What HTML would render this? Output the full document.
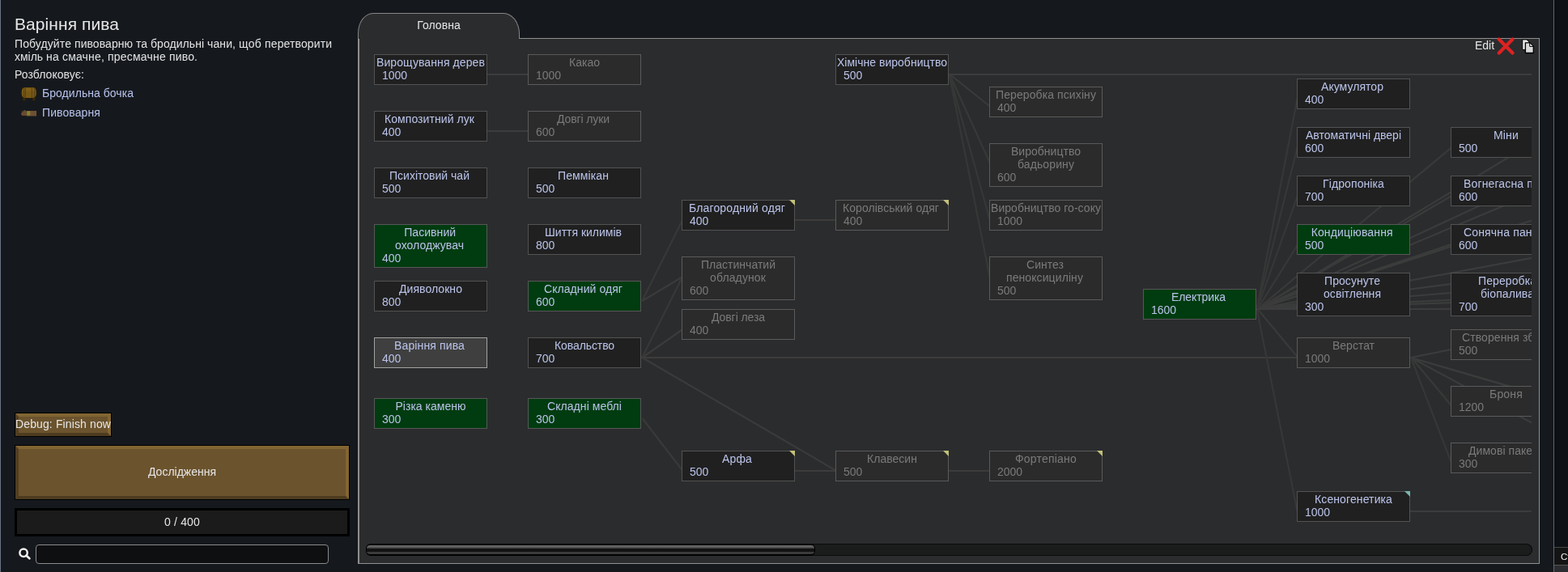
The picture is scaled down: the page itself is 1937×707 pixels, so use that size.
<!DOCTYPE html>
<html lang="uk">
<head>
<meta charset="utf-8">
<title>Дослідження</title>
<style>
*{box-sizing:border-box;margin:0;padding:0}
html,body{width:1937px;height:707px;overflow:hidden;background:#15191e}
body{position:relative;will-change:transform;font-family:"Liberation Sans",sans-serif;font-size:14px;line-height:16px;color:#e4e4e4}
.edgeL{position:absolute;left:0;top:0;width:1px;height:707px;background:#6a7582}
.title{position:absolute;left:18px;top:18px;font-size:21px;line-height:24px;color:#e6e6e6;white-space:nowrap}
.desc{position:absolute;left:18px;top:46px;white-space:nowrap;color:#e2e2e2}
.unl{position:absolute;left:18px;top:84px;color:#e2e2e2}
.item{position:absolute;left:52px;color:#b8c2ec;white-space:nowrap}
.ico{position:absolute;left:26px}
.btn{position:absolute;background:#6b532d;border:1px solid #000;color:#e6e6e6;text-align:center;white-space:nowrap;overflow:hidden}
.btn:before{content:"";position:absolute;left:0;top:0;right:0;bottom:0;border-style:solid;border-width:4px;border-color:#816532 #816532 #4e3c20 #513f22}
.btn span{position:relative}
.prog{position:absolute;left:18px;top:628px;width:414px;height:35px;background:#1b1b1b;border:3px solid #000;text-align:center;line-height:29px;color:#e6e6e6}
.search{position:absolute;left:44px;top:673px;width:362px;height:24px;border:1px solid #8a8a8a;border-radius:4px;background:#0e0f11}
.mag{position:absolute;left:21px;top:675px}
.tab{position:absolute;left:442px;top:16px;width:200px;height:32px;border:1px solid #868686;border-bottom:none;border-radius:19px 20px 0 0/25px 26px 0 0;background:#2b2c2e;text-align:center;line-height:29px;color:#e6e6e6;z-index:2}
.panel{position:absolute;left:442px;top:47px;width:1460px;height:650px;border:1px solid #8e8e8e;border-left-width:2px;background:#2b2c2e}
.view{position:absolute;left:8px;top:9px;width:1440px;height:611px;overflow:hidden}
.lines{position:absolute;left:0;top:0}
.lines line{stroke:#3c3c3c;stroke-width:2.2}
.n{position:absolute;width:140px;border:1px solid #525252;background:#202020;color:#bbc4ea;white-space:nowrap}
.n b{display:block;font-weight:normal;line-height:16px}
.n b:first-of-type{margin-top:1px}
.n u{display:block;text-decoration:none;padding-left:9px;line-height:16px}
.n.d{background:#2b2b2b;border-color:#5a5a5a;color:#7a7a7a}
.n.g{background:#003c10;border-color:#585658}
.n.s{background:#3f3f3f;border-color:#a2a2a2}
.k{position:absolute;right:-1px;top:-1px;width:0;height:0;border-style:solid;border-width:0 7px 7px 0;border-color:transparent #c1c07c transparent transparent}
.k.c{border-color:transparent #78b6ae transparent transparent}
.sb{position:absolute;left:8px;top:624px;width:1441px;height:15px;border-radius:7.5px;background:#1b1c1c;box-shadow:inset 0 0 0 1px #0b0b0b}
.th{position:absolute;left:8px;top:624px;width:555px;height:15px;border-radius:6px;background:#000}
.th:before{content:"";position:absolute;left:1px;right:1px;top:2px;bottom:2px;border-radius:4px;background:linear-gradient(#707070 0,#5c5c5c 18%,#484848 30%,#151515 40%,#111 45%,#111 70%,#3a3a3a 76%,#3c3c3c 100%)}
.edit{position:absolute;left:1378px;top:-1px;color:#e6e6e6;line-height:18px}
.edgeR{position:absolute;left:1919px;top:0;width:1px;height:707px;background:#5b6878}
.right{position:absolute;left:1920px;top:0;width:17px;height:707px;background:#0d1014}
.rbox{position:absolute;left:1920px;top:676px;width:17px;height:23px;background:#141414;border-top:1px solid #474747;border-bottom:1px solid #565656;color:#f0f0f0;font-size:11.5px;line-height:22px;padding-left:8px;white-space:nowrap;overflow:hidden}
.rbot{position:absolute;left:1920px;top:699px;width:17px;height:8px;background:#2c2d30}
</style>
</head>
<body>
<div class="edgeL"></div>
<div class="title" style="letter-spacing:0.074px">Варіння пива</div>
<div class="desc"><span><span style="letter-spacing:0.1px">Побудуйте </span><span style="letter-spacing:0.056px">пивоварню </span><span style="letter-spacing:0.026px">та </span><span style="letter-spacing:0.053px">бродильні </span><span style="letter-spacing:0.096px">чани, </span><span style="letter-spacing:0.238px">щоб </span><span style="letter-spacing:0.112px">перетворити</span></span><br><span><span style="letter-spacing:-0.016px">хміль </span><span style="letter-spacing:0.198px">на </span><span style="letter-spacing:0.164px">смачне, </span><span style="letter-spacing:0.206px">пресмачне </span><span style="letter-spacing:0.128px">пиво.</span></span></div>
<div class="unl" style="letter-spacing:0.055px">Розблоковує:</div>
<svg class="ico" style="top:107px" width="20" height="18" viewBox="26 107 20 18"><rect x="28.3" y="120.5" width="3.2" height="3.8" fill="#3a2808"/><rect x="40.3" y="120.5" width="3.2" height="3.8" fill="#3a2808"/><rect x="26.2" y="107.7" width="19.1" height="13.8" rx="4.2" ry="5" fill="#2a1d06"/><rect x="26.8" y="108.3" width="17.9" height="12.6" rx="3.8" ry="4.6" fill="#775816"/><rect x="27.6" y="108.6" width="16.3" height="4" rx="3" fill="#85631b" opacity=".7"/><path d="M29.6 108.6v12M31.4 108.4v12.4M39.4 108.4v12.4M42.6 108.8v11.6" stroke="#4a360d" stroke-width=".7" fill="none"/></svg>
<div class="item" style="top:107px;letter-spacing:0.046px">Бродильна бочка</div>
<svg class="ico" style="top:134px" width="20" height="12" viewBox="26 134 20 12"><path d="M26.2 139.5l2-1.4 1-1.6 1.6-.6 1.2 1 .8 1.6v4.6h-5.4l-1.2-1.4z" fill="#6a4a30"/><rect x="32.6" y="137" width="12.4" height="6.4" fill="#7a5a38"/><rect x="33.4" y="137.4" width="3.6" height="5" fill="#7f8232"/><path d="M38 138h6.4M38.4 140h6M38 142h6.6" stroke="#5e4228" stroke-width=".8"/><path d="M26.6 137.6l1.2.6" stroke="#3f7a22" stroke-width=".8"/></svg>
<div class="item" style="top:131px;letter-spacing:0.099px">Пивоварня</div>
<div class="btn" style="left:18px;top:510px;width:120px;height:30px;line-height:27px"><span style="letter-spacing:0.123px">Debug: Finish now</span></div>
<div class="btn" style="left:18px;top:550px;width:414px;height:68px;line-height:64px"><span style="letter-spacing:-0.006px">Дослідження</span></div>
<div class="prog"><span style="letter-spacing:0.172px">0 / 400</span></div>
<svg class="mag" width="18" height="19" viewBox="0 0 18 19"><g stroke="#0a0a0a" stroke-opacity="0.55" fill="none" stroke-linecap="round"><circle cx="8.1" cy="8.2" r="4.7" stroke-width="4"/><line x1="11.6" y1="11.7" x2="15.4" y2="15.2" stroke-width="4.4"/></g><circle cx="8.1" cy="8.2" r="4.7" fill="none" stroke="#f2f2f2" stroke-width="2.5"/><line x1="11.6" y1="11.7" x2="15.4" y2="15.2" stroke="#f2f2f2" stroke-width="2.8" stroke-linecap="round"/></svg>
<div class="search"></div>
<div class="tab"><span style="letter-spacing:0.061px">Головна</span></div>
<div class="panel">
<div class="view">
<svg class="lines" width="1440" height="611" viewBox="452 57 1440 611">
<line x1="602" y1="92" x2="652" y2="92"/>
<line x1="602" y1="162" x2="652" y2="162"/>
<line x1="793.2" y1="372" x2="843.2" y2="272" style="stroke:#373837"/>
<line x1="793.32" y1="372" x2="843.32" y2="342" style="stroke:#3a3b3a"/>
<line x1="793.2" y1="442" x2="843.2" y2="342" style="stroke:#373837"/>
<line x1="793.41" y1="442" x2="843.41" y2="407" style="stroke:#3a3b3a"/>
<line x1="792" y1="442" x2="1602" y2="442"/>
<line x1="793.31" y1="442" x2="1033.31" y2="582" style="stroke:#3a3b3a"/>
<line x1="793.45" y1="517" x2="843.45" y2="582" style="stroke:#383938"/>
<line x1="982" y1="582" x2="1032" y2="582"/>
<line x1="1172" y1="582" x2="1222" y2="582"/>
<line x1="982" y1="272" x2="1032" y2="272"/>
<line x1="1173.46" y1="92" x2="1223.46" y2="132" style="stroke:#393a3a"/>
<line x1="1173.13" y1="92" x2="1223.13" y2="202" style="stroke:#373837"/>
<line x1="1172.77" y1="92" x2="1222.77" y2="272" style="stroke:#363736"/>
<line x1="1172.58" y1="92" x2="1222.58" y2="342" style="stroke:#363736"/>
<line x1="1172" y1="92" x2="1982" y2="92"/>
<line x1="1552.56" y1="382" x2="1602.56" y2="122" style="stroke:#363736"/>
<line x1="1552.71" y1="382" x2="1602.71" y2="182" style="stroke:#363736"/>
<line x1="1552.95" y1="382" x2="1602.95" y2="242" style="stroke:#363737"/>
<line x1="1553.35" y1="382" x2="1603.35" y2="302" style="stroke:#373838"/>
<line x1="1553.03" y1="382" x2="1603.03" y2="362" style="stroke:#3b3c3b"/>
<line x1="1553.48" y1="382" x2="1603.48" y2="442" style="stroke:#383938"/>
<line x1="1552.58" y1="382" x2="1602.58" y2="632" style="stroke:#363736"/>
<line x1="1552.9" y1="382" x2="1792.9" y2="302" style="stroke:#3b3c3b"/>
<line x1="1552.25" y1="382" x2="1792.25" y2="362" style="stroke:#3b3c3c"/>
<line x1="1742.58" y1="442" x2="1792.58" y2="432" style="stroke:#3b3c3c"/>
<line x1="1743.48" y1="442" x2="1793.48" y2="502" style="stroke:#383938"/>
<line x1="1743.01" y1="442" x2="1793.01" y2="572" style="stroke:#363737"/>
<line x1="1742" y1="632" x2="1982" y2="632"/>
<line x1="1553.48" y1="382" x2="1793.48" y2="182" style="stroke:#393a39"/>
<line x1="1553.31" y1="382" x2="1793.31" y2="242" style="stroke:#3a3b3a"/>
<line x1="1553.33" y1="382" x2="1983.33" y2="122" style="stroke:#3a3b3a"/>
<line x1="1553.15" y1="382" x2="1983.15" y2="182" style="stroke:#3a3b3b"/>
<line x1="1553.07" y1="382" x2="2173.07" y2="122" style="stroke:#3b3c3b"/>
<line x1="1552.88" y1="382" x2="2172.88" y2="182" style="stroke:#3b3c3b"/>
<line x1="1552.54" y1="382" x2="1982.54" y2="302" style="stroke:#3b3c3c"/>
<line x1="1552.38" y1="382" x2="2172.38" y2="302" style="stroke:#3b3c3c"/>
<line x1="1552.14" y1="382" x2="1982.14" y2="362" style="stroke:#3b3c3c"/>
<line x1="1552.1" y1="382" x2="2172.1" y2="362" style="stroke:#3b3c3c"/>
<line x1="1552" y1="382" x2="1982" y2="382"/>
<line x1="1742.81" y1="442" x2="1982.81" y2="512" style="stroke:#3b3c3b"/>
<line x1="1743.26" y1="442" x2="1983.26" y2="572" style="stroke:#3a3b3b"/>
</svg>
<div class="n" style="left:10px;top:10px;height:38px"><b style="margin-left:2px;letter-spacing:0.097px">Вирощування дерев</b><u>1000</u></div>
<div class="n" style="left:10px;top:80px;height:38px"><b style="margin-left:12px;letter-spacing:0.067px">Композитний лук</b><u>400</u></div>
<div class="n" style="left:10px;top:150px;height:38px"><b style="margin-left:18px;letter-spacing:0.006px">Психітовий чай</b><u>500</u></div>
<div class="n g" style="left:10px;top:220px;height:54px"><b style="margin-left:36.2px;letter-spacing:0.062px">Пасивний</b><b style="margin-left:25px;letter-spacing:0.048px">охолоджувач</b><u>400</u></div>
<div class="n" style="left:10px;top:290px;height:38px"><b style="margin-left:30px;letter-spacing:0.061px">Дияволокно</b><u>800</u></div>
<div class="n s" style="left:10px;top:360px;height:38px"><b style="margin-left:24px;letter-spacing:0.132px">Варіння пива</b><u>400</u></div>
<div class="n g" style="left:10px;top:435px;height:38px"><b style="margin-left:25.5px;letter-spacing:0.013px">Різка каменю</b><u>300</u></div>
<div class="n d" style="left:200px;top:10px;height:38px"><b style="margin-left:50px;letter-spacing:0.013px">Какао</b><u>1000</u></div>
<div class="n d" style="left:200px;top:80px;height:38px"><b style="margin-left:35px;letter-spacing:-0.109px">Довгі луки</b><u>600</u></div>
<div class="n" style="left:200px;top:150px;height:38px"><b style="margin-left:36px;letter-spacing:0.105px">Пеммікан</b><u>500</u></div>
<div class="n" style="left:200px;top:220px;height:38px"><b style="margin-left:20px;letter-spacing:-0.005px">Шиття килимів</b><u>800</u></div>
<div class="n g" style="left:200px;top:290px;height:38px"><b style="margin-left:19px;letter-spacing:0.067px">Складний одяг</b><u>600</u></div>
<div class="n" style="left:200px;top:360px;height:38px"><b style="margin-left:32px;letter-spacing:-0.094px">Ковальство</b><u>700</u></div>
<div class="n g" style="left:200px;top:435px;height:38px"><b style="margin-left:23px;letter-spacing:0.064px">Складні меблі</b><u>300</u></div>
<div class="n" style="left:390px;top:190px;height:38px"><i class="k y"></i><b style="margin-left:8px;letter-spacing:0.15px">Благородний одяг</b><u>400</u></div>
<div class="n d" style="left:390px;top:260px;height:54px"><b style="margin-left:23px;letter-spacing:0.016px">Пластинчатий</b><b style="margin-left:34px;letter-spacing:0.118px">обладунок</b><u>600</u></div>
<div class="n d" style="left:390px;top:325px;height:38px"><b style="margin-left:36px;letter-spacing:-0.081px">Довгі леза</b><u>400</u></div>
<div class="n" style="left:390px;top:500px;height:38px"><i class="k y"></i><b style="margin-left:49px;letter-spacing:0.145px">Арфа</b><u>500</u></div>
<div class="n" style="left:580px;top:10px;height:38px"><b style="margin-left:1px;letter-spacing:0.012px">Хімічне виробництво</b><u>500</u></div>
<div class="n d" style="left:580px;top:190px;height:38px"><i class="k y"></i><b style="margin-left:8px;letter-spacing:0.056px">Королівський одяг</b><u>400</u></div>
<div class="n d" style="left:580px;top:500px;height:38px"><i class="k y"></i><b style="margin-left:38px;letter-spacing:0.033px">Клавесин</b><u>500</u></div>
<div class="n d" style="left:770px;top:50px;height:38px"><b style="margin-left:7px;letter-spacing:0.097px">Переробка психіну</b><u>400</u></div>
<div class="n d" style="left:770px;top:120px;height:54px"><b style="margin-left:26px;letter-spacing:0.018px">Виробництво</b><b style="margin-left:34px;letter-spacing:0.104px">бадьорину</b><u>600</u></div>
<div class="n d" style="left:770px;top:190px;height:38px"><b style="margin-left:1px;letter-spacing:0.045px">Виробництво го-соку</b><u>1000</u></div>
<div class="n d" style="left:770px;top:260px;height:54px"><b style="margin-left:45px;letter-spacing:0.031px">Синтез</b><b style="margin-left:20px;letter-spacing:0.089px">пеноксициліну</b><u>500</u></div>
<div class="n d" style="left:770px;top:500px;height:38px"><i class="k y"></i><b style="margin-left:31px;letter-spacing:0.209px">Фортепіано</b><u>2000</u></div>
<div class="n g" style="left:960px;top:300px;height:38px"><b style="margin-left:34px;letter-spacing:-0.09px">Електрика</b><u>1600</u></div>
<div class="n" style="left:1150px;top:40px;height:38px"><b style="margin-left:29px;letter-spacing:0.05px">Акумулятор</b><u>400</u></div>
<div class="n" style="left:1150px;top:100px;height:38px"><b style="margin-left:10px;letter-spacing:0.001px">Автоматичні двері</b><u>600</u></div>
<div class="n" style="left:1150px;top:160px;height:38px"><b style="margin-left:31px;letter-spacing:0.105px">Гідропоніка</b><u>700</u></div>
<div class="n g" style="left:1150px;top:220px;height:38px"><b style="margin-left:16.7px;letter-spacing:0.123px">Кондиціювання</b><u>500</u></div>
<div class="n" style="left:1150px;top:280px;height:54px"><b style="margin-left:33px;letter-spacing:0.068px">Просунуте</b><b style="margin-left:32px;letter-spacing:0.058px">освітлення</b><u>300</u></div>
<div class="n d" style="left:1150px;top:360px;height:38px"><b style="margin-left:43px;letter-spacing:-0.004px">Верстат</b><u>1000</u></div>
<div class="n" style="left:1150px;top:550px;height:38px"><i class="k c"></i><b style="margin-left:21px;letter-spacing:0.113px">Ксеногенетика</b><u>1000</u></div>
<div class="n" style="left:1340px;top:100px;height:38px"><b style="margin-left:52px;letter-spacing:0.168px">Міни</b><u>500</u></div>
<div class="n" style="left:1340px;top:160px;height:38px"><b style="margin-left:15px;letter-spacing:0.138px">Вогнегасна піна</b><u>600</u></div>
<div class="n" style="left:1340px;top:220px;height:38px"><b style="margin-left:15px;letter-spacing:0.158px">Сонячна панель</b><u>600</u></div>
<div class="n" style="left:1340px;top:280px;height:54px"><b style="margin-left:33px;letter-spacing:0.089px">Переробка</b><b style="margin-left:36px;letter-spacing:0.075px">біопалива</b><u>700</u></div>
<div class="n d" style="left:1340px;top:350px;height:38px"><b style="margin-left:13px;letter-spacing:0.079px">Створення зброї</b><u>500</u></div>
<div class="n d" style="left:1340px;top:420px;height:38px"><b style="margin-left:47px;letter-spacing:0.188px">Броня</b><u>1200</u></div>
<div class="n d" style="left:1340px;top:490px;height:38px"><b style="margin-left:21px;letter-spacing:0.05px">Димові пакети</b><u>300</u></div>
</div>
<div class="sb"></div>
<div class="th"></div>
<div class="edit">Edit</div>
<svg style="position:absolute;left:1405px;top:-3px;overflow:visible" width="24" height="24" viewBox="1849 45 24 24"><path d="M1851.7 48.6 L1868.5 65.4 M1868.5 48.6 L1851.7 65.4" stroke="#dc2222" stroke-width="4.3" stroke-linecap="round" fill="none"/></svg>
<svg style="position:absolute;left:1436px;top:0px" width="17" height="20" viewBox="1880 48 17 20"><path d="M1880.7 48.9 h5.3 l3 3 v9.5 h-8.3z" fill="#e6e6e6" stroke="#000" stroke-width="1" stroke-linejoin="round"/><path d="M1884.4 52.9 h5.3 l4.6 4.5 v8.1 h-9.9z" fill="#dadada" stroke="#000" stroke-width="1.3" stroke-linejoin="round"/><path d="M1889.7 52.9 v4.5 h4.6z" fill="#f6f6f6" stroke="#000" stroke-width="1" stroke-linejoin="round"/></svg>
</div>
<div class="right"></div>
<div class="edgeR"></div>
<div class="rbox">Ст</div>
<div class="rbot"></div>
</body>
</html>
